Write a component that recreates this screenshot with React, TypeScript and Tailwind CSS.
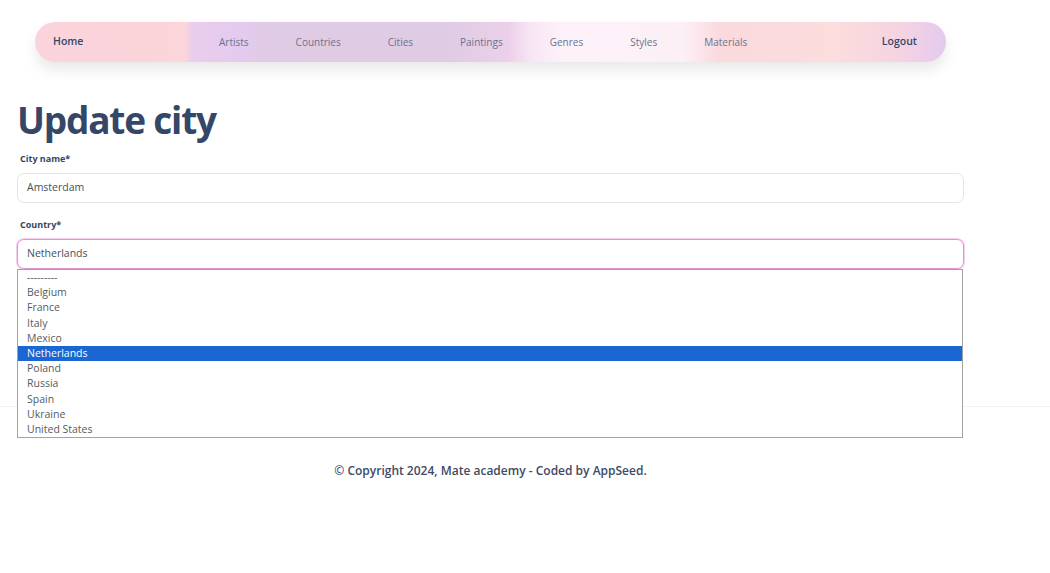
import React from 'react';

const links = ['Artists', 'Countries', 'Cities', 'Paintings', 'Genres', 'Styles', 'Materials'];

const countries = [
  '---------',
  'Belgium',
  'France',
  'Italy',
  'Mexico',
  'Netherlands',
  'Poland',
  'Russia',
  'Spain',
  'Ukraine',
  'United States',
];

const App: React.FC = () => {
  const selected = 'Netherlands';

  return (
    <div className="min-h-screen w-full bg-white font-['Open_Sans',sans-serif]">
      <div className="w-[981px] px-[17px]">
        {/* navbar */}
        <nav className="mx-[18px] mt-[22px] flex h-[40px] items-center rounded-full bg-[linear-gradient(90deg,#fbd3dc_0%,#fbd5da_16.5%,#e9cdec_17.2%,#e4caef_23%,#dfcbe5_25%,#dfcbe4_45%,#ecd0ea_52%,#f8e6f4_54.5%,#fdf2f9_58%,#fcf0f7_71%,#fbdadf_75%,#fcdcdc_88%,#f6d3e2_95%,#e3caee_100%)] pl-[18px] pr-[29px] shadow-[0_8px_14px_rgba(0,0,0,0.09)]">
          <a className="w-[166px] text-[10.5px] font-semibold text-[#344767]">Home</a>
          <ul className="flex gap-[47px]">
            {links.map((l) => (
              <li key={l} className="text-[10px] text-[#67748e]">
                {l}
              </li>
            ))}
          </ul>
          <a className="ml-auto text-[10.5px] font-semibold text-[#344767]">Logout</a>
        </nav>

        <h1 className="mt-[34px] text-[37px] font-bold leading-[48px] tracking-[-1.2px] text-[#344767]">Update city</h1>

        <form>
          <label className="mt-[8px] block px-[3px] text-[9px] font-bold leading-[14px] text-[#344767]">City name*</label>
          <div className="mt-[7px] flex h-[30px] items-center rounded-[7px] border border-[#e4e4e4] px-[9px] text-[10.5px] text-[#495057]">
            Amsterdam
          </div>

          <label className="mt-[15px] block px-[3px] text-[9px] font-bold leading-[14px] text-[#344767]">Country*</label>
          <div className="relative mt-[7px]">
            <div className="flex h-[30px] items-center rounded-[7px] border border-[#e293d3] px-[9px] text-[10.5px] text-[#495057] shadow-[0_0_0_1px_#f5cdee]">
              {selected}
            </div>
            {/* open select list */}
            <ul className="absolute left-0 top-full z-10 w-[946px] border border-[#a3a3a3] bg-white py-0">
              {countries.map((c) => (
                <li
                  key={c}
                  className={
                    c === selected
                      ? 'h-[15.2px] bg-[#1a66d2] px-[9px] text-[10.5px] leading-[15.2px] text-white'
                      : 'h-[15.2px] px-[9px] text-[10.5px] leading-[15.2px] text-[#555b62]'
                  }
                >
                  {c}
                </li>
              ))}
            </ul>
          </div>
        </form>
      </div>

      <div className="mt-[137px] w-full border-t border-[#f3f3f3]" />

      <footer className="w-[981px] pt-[56px] text-center text-[12px] font-semibold leading-[16px] text-[#3f4a66]">
        © Copyright 2024, Mate academy - Coded by AppSeed.
      </footer>
    </div>
  );
};

export default App;
